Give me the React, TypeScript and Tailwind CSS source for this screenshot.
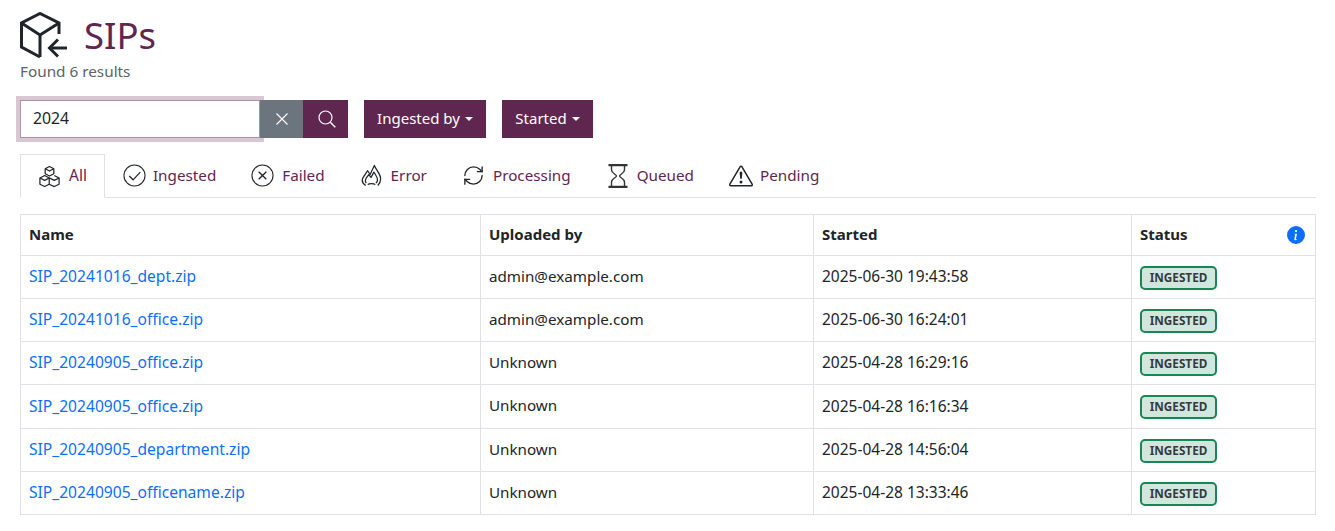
import { BsExclamationTriangle, BsInfoCircleFill } from 'react-icons/bs'
import { RefreshCw } from 'lucide-react'

function BoxesIcon() {
  return (
    <svg viewBox="0 0 24 24" className="h-[23px] w-[23px] shrink-0" fill="none" stroke="#212529" strokeWidth="1.3" strokeLinejoin="round">
      <path d="M12 1.500l4.500 2.400v5.200L12 11.500 7.500 9.100V3.900z" />
      <path d="M7.500 3.900L12 6.300l4.500-2.400" />
      <path d="M7 11l4.700 2.500v6.600L7 22.500l-5-2.400v-6.600z" />
      <path d="M2 13.500L7 16l4.700-2.500" />
      <path d="M17 11l5 2.500v6.600l-5 2.400-5.300-2.400" />
      <path d="M11.700 13.500L17 16l5-2.500" />
    </svg>
  )
}

function CheckCircleIcon() {
  return (
    <svg viewBox="0 0 24 24" className="h-[23px] w-[23px] shrink-0" fill="none" stroke="#212529" strokeWidth="1.1">
      <circle cx="12" cy="12" r="11" />
      <path d="M6.500 12.500l4 4 7.500-8" strokeWidth="1.3" />
    </svg>
  )
}

function XCircleIcon() {
  return (
    <svg viewBox="0 0 24 24" className="h-[23px] w-[23px] shrink-0" fill="none" stroke="#212529" strokeWidth="1.1">
      <circle cx="12" cy="12" r="11" />
      <path d="M8 8l8 8M16 8l-8 8" strokeWidth="1.4" />
    </svg>
  )
}

function FlameIcon() {
  return (
    <svg viewBox="0 0 24 24" className="h-[23px] w-[23px] shrink-0" fill="none" stroke="#212529" strokeWidth="1.3" strokeLinejoin="round">
      <path d="M6 22.500C3 20.500 1.500 17.500 3 14.500L8 7l2.500 4L15 1.500c1.500 4.500 6 8 6.500 13.500.2 3-1 5.500-3 7.500" />
      <path d="M6.500 20c-1.500-2-1-4 .5-6l2.200-3 2.300 3 3-5.500c2 3.500 4.200 5.500 3.700 8.500-.2 1.200-.6 2-1.500 3" />
      <path d="M8 21.500c2-1.500 6-1.500 8 0" />
    </svg>
  )
}

function RepeatIcon() {
  return <RefreshCw className="h-[23px] w-[23px] shrink-0 text-[#212529]" strokeWidth={1.4} />
}

function HourglassIcon() {
  return (
    <svg viewBox="0 0 20 24" className="h-[24px] w-[20px] shrink-0" fill="none" stroke="#333" strokeWidth="1.4">
      <path d="M0.500 1.200H19.500M0.500 22.800H19.500" strokeWidth="2.200" />
      <path d="M3.500 2v4c0 3.500 5 4.500 5 6s-5 2.500-5 6v4" />
      <path d="M16.500 2v4c0 3.500-5 4.500-5 6s5 2.500 5 6v4" />
    </svg>
  )
}

function WarningIcon() {
  return <BsExclamationTriangle className="h-[24px] w-[24px] shrink-0 text-[#212529]" />
}

const tabs = [
  {
    label: 'All',
    icon: BoxesIcon,
    className: 'mb-[-1px] gap-[8px] border-[#dee2e6] border-b-white bg-white pl-[17px] pr-[17px] text-[15.5px]',
  },
  { label: 'Ingested', icon: CheckCircleIcon, className: 'gap-[7px] border-transparent pl-[17px] pr-[16px] text-[15.25px]' },
  { label: 'Failed', icon: XCircleIcon, className: 'gap-[8px] border-transparent pl-[17px] pr-[16px] text-[15.25px]' },
  { label: 'Error', icon: FlameIcon, className: 'gap-[8px] border-transparent pl-[17px] pr-[16px] text-[15.25px]' },
  { label: 'Processing', icon: RepeatIcon, className: 'gap-[8px] border-transparent pl-[17px] pr-[18px] text-[15.25px]' },
  { label: 'Queued', icon: HourglassIcon, className: 'gap-[9px] border-transparent pl-[17px] pr-[16px] text-[15.25px]' },
  { label: 'Pending', icon: WarningIcon, className: 'gap-[7px] border-transparent pl-[17px] pr-[17px] text-[15.25px]' },
]

const rows = [
  ['SIP_20241016_dept.zip', 'admin@example.com', '2025-06-30 19:43:58'],
  ['SIP_20241016_office.zip', 'admin@example.com', '2025-06-30 16:24:01'],
  ['SIP_20240905_office.zip', 'Unknown', '2025-04-28 16:29:16'],
  ['SIP_20240905_office.zip', 'Unknown', '2025-04-28 16:16:34'],
  ['SIP_20240905_department.zip', 'Unknown', '2025-04-28 14:56:04'],
  ['SIP_20240905_officename.zip', 'Unknown', '2025-04-28 13:33:46'],
]

function SipIcon() {
  return (
    <svg viewBox="0 0 50 47" className="h-[47px] w-[50px] shrink-0" fill="none" stroke="#212529" strokeWidth="3">
      <path d="M20 45L1.500 35V11L20 1.500 39 11v11" />
      <path d="M1.500 11L20 23 39 11" />
      <path d="M20 23v22" />
      <path d="M47 36H30" />
      <path d="M38 27.500L29.500 36l8.500 8.500" />
    </svg>
  )
}

function Caret() {
  return <span className="ml-[5px] h-0 w-0 border-x-[4px] border-t-[4px] border-x-transparent border-t-white" />
}

export default function App() {
  return (
    <div className="min-h-[531px] bg-white pl-5 pr-[19px] pt-[12px] font-['Noto_Sans',sans-serif] text-[16px] text-[#212529]">
      {/* Title */}
      <div className="flex h-[47px] items-center">
        <SipIcon />
        <h1 className="ml-[14px] text-[36.5px] leading-none text-[#5f2650]">SIPs</h1>
      </div>
      <div className="h-[24px] text-[15.3px] leading-[24px] text-[#5c636a]">Found 6 results</div>

      {/* Search + filters */}
      <div className="mt-[17px] flex h-[38px] items-stretch">
        <div className="flex w-[240px] items-center border border-[#ae93a8] bg-white pl-3 text-[15.8px] ring-4 ring-[#d7c8d3]">2024</div>
        <button className="z-10 flex w-[43px] items-center justify-center bg-[#6c757d] text-white">
          <svg viewBox="0 0 12 12" className="h-[12px] w-[12px]" fill="none" stroke="currentColor" strokeWidth="1.1">
            <path d="M0.500 0.500l11 11M11.500 0.500l-11 11" />
          </svg>
        </button>
        <button className="flex w-[45px] items-center justify-center bg-[#5f2650] text-white">
          <svg viewBox="0 0 18 18" className="ml-[2px] h-[18px] w-[18px]" fill="none" stroke="currentColor" strokeWidth="1.2">
            <circle cx="7.500" cy="7.500" r="6.500" />
            <path d="M12.300 12.300l5 5" strokeWidth="1.500" />
          </svg>
        </button>
        <button className="ml-4 flex w-[122px] items-center justify-center bg-[#5f2650] pb-[1px] text-[15px] text-white">
          Ingested by
          <Caret />
        </button>
        <button className="ml-4 flex w-[91px] items-center justify-center bg-[#5f2650] pb-[1px] text-[15px] text-white">
          Started
          <Caret />
        </button>
      </div>

      {/* Tabs */}
      <div className="mt-[16px] flex h-[44px] border-b border-[#dee2e6]">
        {tabs.map((tab) => {
          const Icon = tab.icon
          return (
            <div key={tab.label} className={`flex items-center border text-[#5f2650] ${tab.className}`}>
              <Icon />
              {tab.label}
            </div>
          )
        })}
      </div>

      {/* Table */}
      <table className="mt-[16px] w-full table-fixed border-collapse text-[15px]">
        <colgroup>
          <col className="w-[460px]" />
          <col className="w-[333px]" />
          <col className="w-[318px]" />
          <col />
        </colgroup>
        <thead>
          <tr className="h-[41px]">
            <th className="border border-[#dee2e6] px-2 pb-[1px] text-left font-bold">Name</th>
            <th className="border border-[#dee2e6] px-2 pb-[1px] text-left font-bold">Uploaded by</th>
            <th className="border border-[#dee2e6] px-2 pb-[1px] text-left font-bold">Started</th>
            <th className="border border-[#dee2e6] px-2 text-left font-bold">
              <div className="flex items-center justify-between pr-[2px]">
                <span className="pb-[1px]">Status</span>
                <BsInfoCircleFill className="h-[18px] w-[18px] text-[#0d6efd]" />
              </div>
            </th>
          </tr>
        </thead>
        <tbody>
          {rows.map((row, i) => (
            <tr key={i} className={i === 3 ? 'h-[44px]' : 'h-[43px]'}>
              <td className="border border-[#dee2e6] px-2 text-[15.6px] text-[#0d6efd]">{row[0]}</td>
              <td className="border border-[#dee2e6] px-2 pb-[2px] text-[15.2px]">{row[1]}</td>
              <td className="border border-[#dee2e6] px-2 text-[15.5px]">{row[2]}</td>
              <td className="border border-[#dee2e6] px-2">
                <span className="mt-[1px] flex h-[24px] w-[77px] items-center justify-center rounded-[5px] border-2 border-[#198754] bg-[#d1e7dd] text-[11.75px] font-bold text-[#343a40]">
                  INGESTED
                </span>
              </td>
            </tr>
          ))}
        </tbody>
      </table>
    </div>
  )
}
